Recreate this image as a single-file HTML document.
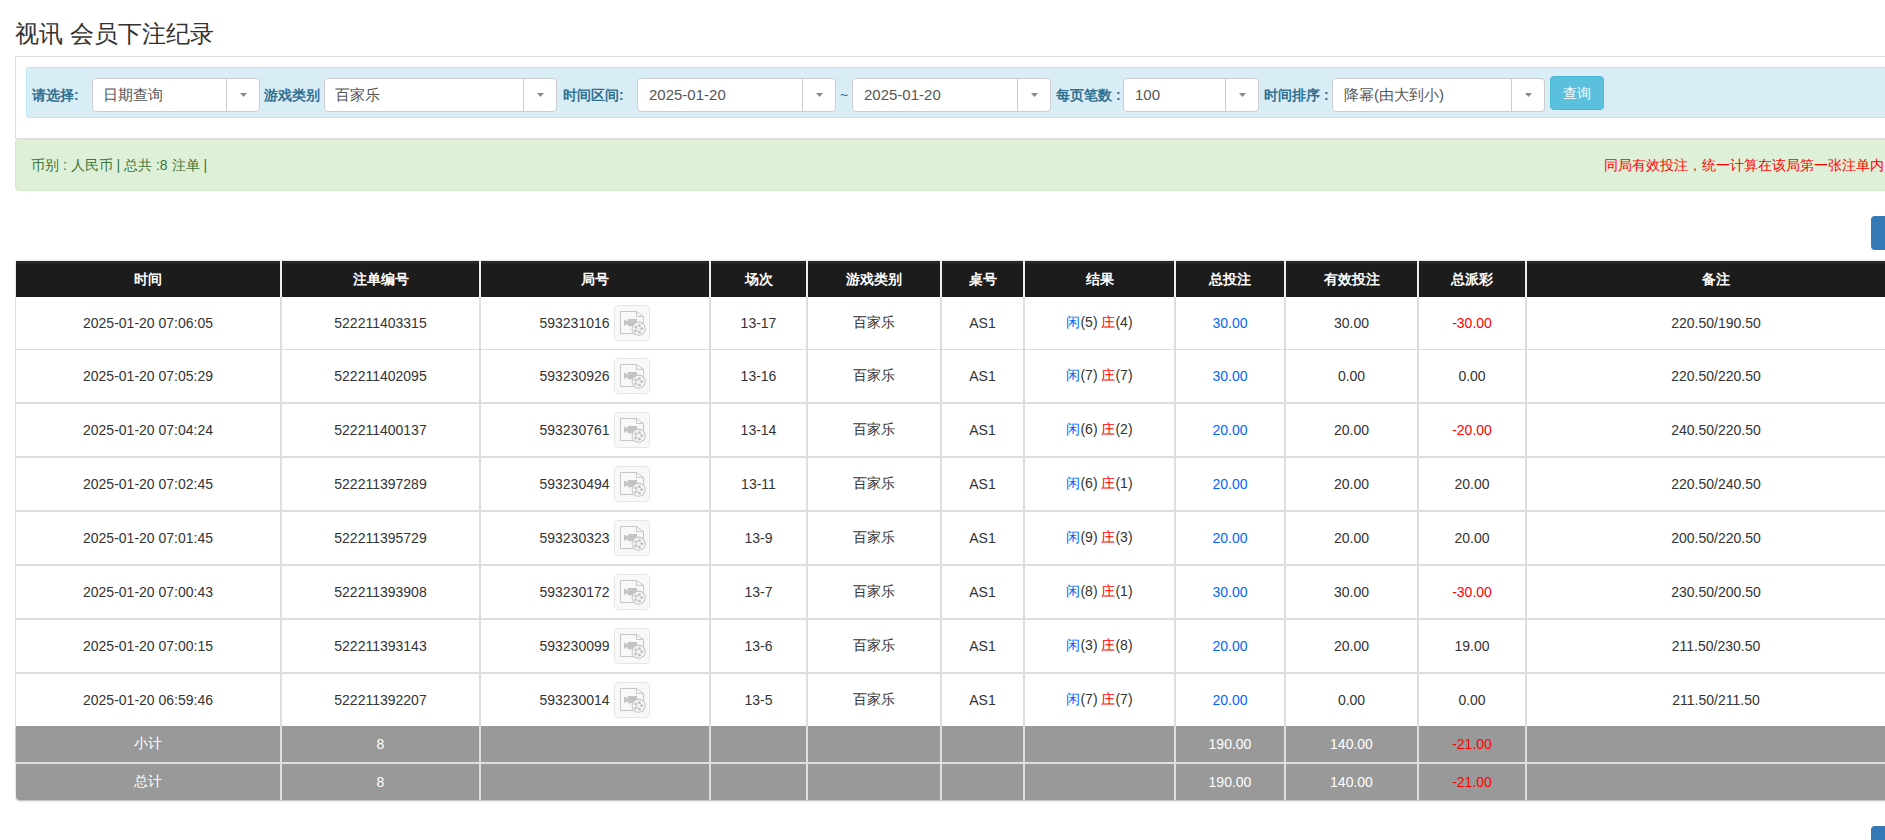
<!DOCTYPE html>
<html><head><meta charset="utf-8">
<style>
html,body{margin:0;padding:0;width:1885px;height:840px;overflow:hidden;background:#fff;}
body{font-family:"Liberation Sans",sans-serif;font-size:14px;color:#333;position:relative;}
.a{position:absolute;}
.title{left:15px;top:18px;font-size:24px;line-height:32px;color:#333;white-space:nowrap;}
.panel{left:15px;top:56px;width:1888px;height:81px;border:1px solid #ddd;border-right:none;}
.info{left:26px;top:67px;width:1880px;height:49px;background:#d9edf7;border:1px solid #bce8f1;border-radius:3px;}
.lbl{color:#31708f;font-weight:bold;font-size:14px;line-height:20px;top:85px;white-space:nowrap;}
.sel{top:78px;height:32px;background:#fff;border:1px solid #ccc;border-radius:4px;}
.sel .t{position:absolute;left:11px;top:6px;font-size:15px;line-height:20px;color:#555;white-space:nowrap;}
.sel .d{position:absolute;top:0;bottom:0;right:32px;width:1px;background:#ccc;}
.sel .ar{position:absolute;right:12px;top:14px;width:7px;height:4px;}
.btn{left:1550px;top:76px;width:52px;height:32px;background:#5bc0de;border:1px solid #46b8da;border-radius:4px;color:#fff;font-size:14px;line-height:32px;text-align:center;}
.ok{left:15px;top:139px;width:1888px;height:50px;background:#dff0d8;border:1px solid #d6e9c6;border-radius:4px;}
.okt{left:31px;top:155px;color:#3c763d;font-size:14px;line-height:20px;white-space:nowrap;}
.red{left:1604px;top:155px;color:#f00;font-size:14px;line-height:20px;white-space:nowrap;}
.bbtn{left:1871px;top:216px;width:40px;height:34px;background:#337ab7;border-radius:4px;}
.bbtn2{left:1871px;top:826px;width:40px;height:34px;background:#337ab7;border-radius:4px;}
/* table */
.tb{left:15px;top:261px;width:1890px;height:539px;}
.c{position:absolute;display:flex;align-items:center;justify-content:center;white-space:nowrap;}
.h>span{position:relative;top:1px;}
.h{background:linear-gradient(#1c1c1c 0,#2a2a2a 1px,#2a2a2a 2px,#1c1c1c 3px);color:#fff;font-weight:bold;}
.w{background:#fff;}
.g{background:#999;color:#fff;}
.bl4{border-bottom-left-radius:4px;}
.bl{color:#0066ff;}
.rd{color:#f00;}
.ic{display:inline-block;width:34px;height:34px;border:1px solid #e6e6e6;border-radius:4px;background:#f8f8f8;margin-left:5px;vertical-align:middle;margin-top:-30px;margin-bottom:-30px;position:relative;left:-1px;top:-1px;}
.ic svg{position:absolute;left:0;top:0;}
</style></head><body>
<div class="a title">视讯 会员下注纪录</div>
<div class="a panel"></div>
<div class="a info"></div>
<div class="a lbl" style="left:32px">请选择:</div>
<div class="a sel" style="left:92px;width:166px"><span class="t" style="left:10px">日期查询</span><span class="d"></span><svg class="ar" width="7" height="4"><polygon points="0,0 7,0 3.5,4" fill="#888"/></svg></div>
<div class="a lbl" style="left:264px">游戏类别</div>
<div class="a sel" style="left:324px;width:231px"><span class="t" style="left:10px">百家乐</span><span class="d"></span><svg class="ar" width="7" height="4"><polygon points="0,0 7,0 3.5,4" fill="#888"/></svg></div>
<div class="a lbl" style="left:563px">时间区间:</div>
<div class="a sel" style="left:637px;width:197px"><span class="t">2025-01-20</span><span class="d"></span><svg class="ar" width="7" height="4"><polygon points="0,0 7,0 3.5,4" fill="#888"/></svg></div>
<div class="a" style="left:840px;top:85px;line-height:20px;color:#31708f;">~</div>
<div class="a sel" style="left:852px;width:197px"><span class="t">2025-01-20</span><span class="d"></span><svg class="ar" width="7" height="4"><polygon points="0,0 7,0 3.5,4" fill="#888"/></svg></div>
<div class="a lbl" style="left:1056px">每页笔数 :</div>
<div class="a sel" style="left:1123px;width:134px"><span class="t">100</span><span class="d"></span><svg class="ar" width="7" height="4"><polygon points="0,0 7,0 3.5,4" fill="#888"/></svg></div>
<div class="a lbl" style="left:1264px">时间排序 :</div>
<div class="a sel" style="left:1332px;width:211px"><span class="t" style="left:11px">降幂(由大到小)</span><span class="d"></span><svg class="ar" width="7" height="4"><polygon points="0,0 7,0 3.5,4" fill="#888"/></svg></div>
<div class="a btn">查询</div>
<div class="a ok"></div>
<div class="a okt">币别 : 人民币 | 总共 :8 注单 |</div>
<div class="a red">同局有效投注，统一计算在该局第一张注单内</div>
<div class="a bbtn"></div>
<div class="a bbtn2"></div>
<div class="a tb">
<div style="position:absolute;left:1px;top:0;width:1889px;height:36px;background:#eee;box-shadow:0 0 2px rgba(0,0,0,.25)"></div>
<div style="position:absolute;left:0;top:36px;width:1890px;height:465px;background:#ddd"></div>
<div style="position:absolute;left:1px;top:465px;width:1889px;height:74px;background:#dedede;border-radius:0 0 4px 4px;box-shadow:0 1px 2px rgba(0,0,0,.3)"></div>
<div class="c h" style="left:1px;top:0px;width:264px;height:36px"><span>时间</span></div>
<div class="c h" style="left:267px;top:0px;width:197px;height:36px"><span>注单编号</span></div>
<div class="c h" style="left:466px;top:0px;width:228px;height:36px"><span>局号</span></div>
<div class="c h" style="left:696px;top:0px;width:95px;height:36px"><span>场次</span></div>
<div class="c h" style="left:793px;top:0px;width:132px;height:36px"><span>游戏类别</span></div>
<div class="c h" style="left:927px;top:0px;width:81px;height:36px"><span>桌号</span></div>
<div class="c h" style="left:1010px;top:0px;width:149px;height:36px"><span>结果</span></div>
<div class="c h" style="left:1161px;top:0px;width:108px;height:36px"><span>总投注</span></div>
<div class="c h" style="left:1271px;top:0px;width:131px;height:36px"><span>有效投注</span></div>
<div class="c h" style="left:1404px;top:0px;width:106px;height:36px"><span>总派彩</span></div>
<div class="c h" style="left:1512px;top:0px;width:378px;height:36px"><span>备注</span></div>
<div class="c w" style="left:1px;top:36px;width:264px;height:52px"><span>2025-01-20 07:06:05</span></div>
<div class="c w" style="left:267px;top:36px;width:197px;height:52px"><span>522211403315</span></div>
<div class="c w" style="left:466px;top:36px;width:228px;height:52px"><span>593231016<span class="ic"><svg width="34" height="34" viewBox="0 0 34 34"><path d="M5.5 5.5H21.5L28.5 10.5V27.5H5.5Z" fill="#f8f8f8" stroke="#c6c6c6" stroke-width="1"></path><path d="M21.5 5.5V10.5H28.5" fill="none" stroke="#c6c6c6" stroke-width="1"></path><path d="M9 13.5L12.7 15.5V13H22V20.3H12.7V18L9 20Z" fill="#c4c4c4"></path><circle cx="23.7" cy="22.7" r="6.6" fill="#f8f8f8" stroke="#c6c6c6" stroke-width="1.1"></circle><circle cx="20.9" cy="21" r="1.6" fill="#c4c4c4"></circle><circle cx="24.4" cy="19.5" r="1.6" fill="#c4c4c4"></circle><circle cx="26.8" cy="22.6" r="1.6" fill="#c4c4c4"></circle><circle cx="24.4" cy="26" r="1.6" fill="#c4c4c4"></circle><circle cx="20.8" cy="24.8" r="1.6" fill="#c4c4c4"></circle><circle cx="23.5" cy="22.8" r="0.5" fill="#c4c4c4"></circle></svg></span></span></div>
<div class="c w" style="left:696px;top:36px;width:95px;height:52px"><span>13-17</span></div>
<div class="c w" style="left:793px;top:36px;width:132px;height:52px"><span>百家乐</span></div>
<div class="c w" style="left:927px;top:36px;width:81px;height:52px"><span>AS1</span></div>
<div class="c w" style="left:1010px;top:36px;width:149px;height:52px"><span><span class="bl">闲</span>(5) <span class="rd">庄</span>(4)</span></div>
<div class="c w" style="left:1161px;top:36px;width:108px;height:52px"><span><span class="bl">30.00</span></span></div>
<div class="c w" style="left:1271px;top:36px;width:131px;height:52px"><span>30.00</span></div>
<div class="c w" style="left:1404px;top:36px;width:106px;height:52px"><span><span class="rd">-30.00</span></span></div>
<div class="c w" style="left:1512px;top:36px;width:378px;height:52px"><span>220.50/190.50</span></div>
<div class="c w" style="left:1px;top:89px;width:264px;height:52px"><span>2025-01-20 07:05:29</span></div>
<div class="c w" style="left:267px;top:89px;width:197px;height:52px"><span>522211402095</span></div>
<div class="c w" style="left:466px;top:89px;width:228px;height:52px"><span>593230926<span class="ic"><svg width="34" height="34" viewBox="0 0 34 34"><path d="M5.5 5.5H21.5L28.5 10.5V27.5H5.5Z" fill="#f8f8f8" stroke="#c6c6c6" stroke-width="1"></path><path d="M21.5 5.5V10.5H28.5" fill="none" stroke="#c6c6c6" stroke-width="1"></path><path d="M9 13.5L12.7 15.5V13H22V20.3H12.7V18L9 20Z" fill="#c4c4c4"></path><circle cx="23.7" cy="22.7" r="6.6" fill="#f8f8f8" stroke="#c6c6c6" stroke-width="1.1"></circle><circle cx="20.9" cy="21" r="1.6" fill="#c4c4c4"></circle><circle cx="24.4" cy="19.5" r="1.6" fill="#c4c4c4"></circle><circle cx="26.8" cy="22.6" r="1.6" fill="#c4c4c4"></circle><circle cx="24.4" cy="26" r="1.6" fill="#c4c4c4"></circle><circle cx="20.8" cy="24.8" r="1.6" fill="#c4c4c4"></circle><circle cx="23.5" cy="22.8" r="0.5" fill="#c4c4c4"></circle></svg></span></span></div>
<div class="c w" style="left:696px;top:89px;width:95px;height:52px"><span>13-16</span></div>
<div class="c w" style="left:793px;top:89px;width:132px;height:52px"><span>百家乐</span></div>
<div class="c w" style="left:927px;top:89px;width:81px;height:52px"><span>AS1</span></div>
<div class="c w" style="left:1010px;top:89px;width:149px;height:52px"><span><span class="bl">闲</span>(7) <span class="rd">庄</span>(7)</span></div>
<div class="c w" style="left:1161px;top:89px;width:108px;height:52px"><span><span class="bl">30.00</span></span></div>
<div class="c w" style="left:1271px;top:89px;width:131px;height:52px"><span>0.00</span></div>
<div class="c w" style="left:1404px;top:89px;width:106px;height:52px"><span>0.00</span></div>
<div class="c w" style="left:1512px;top:89px;width:378px;height:52px"><span>220.50/220.50</span></div>
<div class="c w" style="left:1px;top:143px;width:264px;height:52px"><span>2025-01-20 07:04:24</span></div>
<div class="c w" style="left:267px;top:143px;width:197px;height:52px"><span>522211400137</span></div>
<div class="c w" style="left:466px;top:143px;width:228px;height:52px"><span>593230761<span class="ic"><svg width="34" height="34" viewBox="0 0 34 34"><path d="M5.5 5.5H21.5L28.5 10.5V27.5H5.5Z" fill="#f8f8f8" stroke="#c6c6c6" stroke-width="1"></path><path d="M21.5 5.5V10.5H28.5" fill="none" stroke="#c6c6c6" stroke-width="1"></path><path d="M9 13.5L12.7 15.5V13H22V20.3H12.7V18L9 20Z" fill="#c4c4c4"></path><circle cx="23.7" cy="22.7" r="6.6" fill="#f8f8f8" stroke="#c6c6c6" stroke-width="1.1"></circle><circle cx="20.9" cy="21" r="1.6" fill="#c4c4c4"></circle><circle cx="24.4" cy="19.5" r="1.6" fill="#c4c4c4"></circle><circle cx="26.8" cy="22.6" r="1.6" fill="#c4c4c4"></circle><circle cx="24.4" cy="26" r="1.6" fill="#c4c4c4"></circle><circle cx="20.8" cy="24.8" r="1.6" fill="#c4c4c4"></circle><circle cx="23.5" cy="22.8" r="0.5" fill="#c4c4c4"></circle></svg></span></span></div>
<div class="c w" style="left:696px;top:143px;width:95px;height:52px"><span>13-14</span></div>
<div class="c w" style="left:793px;top:143px;width:132px;height:52px"><span>百家乐</span></div>
<div class="c w" style="left:927px;top:143px;width:81px;height:52px"><span>AS1</span></div>
<div class="c w" style="left:1010px;top:143px;width:149px;height:52px"><span><span class="bl">闲</span>(6) <span class="rd">庄</span>(2)</span></div>
<div class="c w" style="left:1161px;top:143px;width:108px;height:52px"><span><span class="bl">20.00</span></span></div>
<div class="c w" style="left:1271px;top:143px;width:131px;height:52px"><span>20.00</span></div>
<div class="c w" style="left:1404px;top:143px;width:106px;height:52px"><span><span class="rd">-20.00</span></span></div>
<div class="c w" style="left:1512px;top:143px;width:378px;height:52px"><span>240.50/220.50</span></div>
<div class="c w" style="left:1px;top:197px;width:264px;height:52px"><span>2025-01-20 07:02:45</span></div>
<div class="c w" style="left:267px;top:197px;width:197px;height:52px"><span>522211397289</span></div>
<div class="c w" style="left:466px;top:197px;width:228px;height:52px"><span>593230494<span class="ic"><svg width="34" height="34" viewBox="0 0 34 34"><path d="M5.5 5.5H21.5L28.5 10.5V27.5H5.5Z" fill="#f8f8f8" stroke="#c6c6c6" stroke-width="1"></path><path d="M21.5 5.5V10.5H28.5" fill="none" stroke="#c6c6c6" stroke-width="1"></path><path d="M9 13.5L12.7 15.5V13H22V20.3H12.7V18L9 20Z" fill="#c4c4c4"></path><circle cx="23.7" cy="22.7" r="6.6" fill="#f8f8f8" stroke="#c6c6c6" stroke-width="1.1"></circle><circle cx="20.9" cy="21" r="1.6" fill="#c4c4c4"></circle><circle cx="24.4" cy="19.5" r="1.6" fill="#c4c4c4"></circle><circle cx="26.8" cy="22.6" r="1.6" fill="#c4c4c4"></circle><circle cx="24.4" cy="26" r="1.6" fill="#c4c4c4"></circle><circle cx="20.8" cy="24.8" r="1.6" fill="#c4c4c4"></circle><circle cx="23.5" cy="22.8" r="0.5" fill="#c4c4c4"></circle></svg></span></span></div>
<div class="c w" style="left:696px;top:197px;width:95px;height:52px"><span>13-11</span></div>
<div class="c w" style="left:793px;top:197px;width:132px;height:52px"><span>百家乐</span></div>
<div class="c w" style="left:927px;top:197px;width:81px;height:52px"><span>AS1</span></div>
<div class="c w" style="left:1010px;top:197px;width:149px;height:52px"><span><span class="bl">闲</span>(6) <span class="rd">庄</span>(1)</span></div>
<div class="c w" style="left:1161px;top:197px;width:108px;height:52px"><span><span class="bl">20.00</span></span></div>
<div class="c w" style="left:1271px;top:197px;width:131px;height:52px"><span>20.00</span></div>
<div class="c w" style="left:1404px;top:197px;width:106px;height:52px"><span>20.00</span></div>
<div class="c w" style="left:1512px;top:197px;width:378px;height:52px"><span>220.50/240.50</span></div>
<div class="c w" style="left:1px;top:251px;width:264px;height:52px"><span>2025-01-20 07:01:45</span></div>
<div class="c w" style="left:267px;top:251px;width:197px;height:52px"><span>522211395729</span></div>
<div class="c w" style="left:466px;top:251px;width:228px;height:52px"><span>593230323<span class="ic"><svg width="34" height="34" viewBox="0 0 34 34"><path d="M5.5 5.5H21.5L28.5 10.5V27.5H5.5Z" fill="#f8f8f8" stroke="#c6c6c6" stroke-width="1"></path><path d="M21.5 5.5V10.5H28.5" fill="none" stroke="#c6c6c6" stroke-width="1"></path><path d="M9 13.5L12.7 15.5V13H22V20.3H12.7V18L9 20Z" fill="#c4c4c4"></path><circle cx="23.7" cy="22.7" r="6.6" fill="#f8f8f8" stroke="#c6c6c6" stroke-width="1.1"></circle><circle cx="20.9" cy="21" r="1.6" fill="#c4c4c4"></circle><circle cx="24.4" cy="19.5" r="1.6" fill="#c4c4c4"></circle><circle cx="26.8" cy="22.6" r="1.6" fill="#c4c4c4"></circle><circle cx="24.4" cy="26" r="1.6" fill="#c4c4c4"></circle><circle cx="20.8" cy="24.8" r="1.6" fill="#c4c4c4"></circle><circle cx="23.5" cy="22.8" r="0.5" fill="#c4c4c4"></circle></svg></span></span></div>
<div class="c w" style="left:696px;top:251px;width:95px;height:52px"><span>13-9</span></div>
<div class="c w" style="left:793px;top:251px;width:132px;height:52px"><span>百家乐</span></div>
<div class="c w" style="left:927px;top:251px;width:81px;height:52px"><span>AS1</span></div>
<div class="c w" style="left:1010px;top:251px;width:149px;height:52px"><span><span class="bl">闲</span>(9) <span class="rd">庄</span>(3)</span></div>
<div class="c w" style="left:1161px;top:251px;width:108px;height:52px"><span><span class="bl">20.00</span></span></div>
<div class="c w" style="left:1271px;top:251px;width:131px;height:52px"><span>20.00</span></div>
<div class="c w" style="left:1404px;top:251px;width:106px;height:52px"><span>20.00</span></div>
<div class="c w" style="left:1512px;top:251px;width:378px;height:52px"><span>200.50/220.50</span></div>
<div class="c w" style="left:1px;top:305px;width:264px;height:52px"><span>2025-01-20 07:00:43</span></div>
<div class="c w" style="left:267px;top:305px;width:197px;height:52px"><span>522211393908</span></div>
<div class="c w" style="left:466px;top:305px;width:228px;height:52px"><span>593230172<span class="ic"><svg width="34" height="34" viewBox="0 0 34 34"><path d="M5.5 5.5H21.5L28.5 10.5V27.5H5.5Z" fill="#f8f8f8" stroke="#c6c6c6" stroke-width="1"></path><path d="M21.5 5.5V10.5H28.5" fill="none" stroke="#c6c6c6" stroke-width="1"></path><path d="M9 13.5L12.7 15.5V13H22V20.3H12.7V18L9 20Z" fill="#c4c4c4"></path><circle cx="23.7" cy="22.7" r="6.6" fill="#f8f8f8" stroke="#c6c6c6" stroke-width="1.1"></circle><circle cx="20.9" cy="21" r="1.6" fill="#c4c4c4"></circle><circle cx="24.4" cy="19.5" r="1.6" fill="#c4c4c4"></circle><circle cx="26.8" cy="22.6" r="1.6" fill="#c4c4c4"></circle><circle cx="24.4" cy="26" r="1.6" fill="#c4c4c4"></circle><circle cx="20.8" cy="24.8" r="1.6" fill="#c4c4c4"></circle><circle cx="23.5" cy="22.8" r="0.5" fill="#c4c4c4"></circle></svg></span></span></div>
<div class="c w" style="left:696px;top:305px;width:95px;height:52px"><span>13-7</span></div>
<div class="c w" style="left:793px;top:305px;width:132px;height:52px"><span>百家乐</span></div>
<div class="c w" style="left:927px;top:305px;width:81px;height:52px"><span>AS1</span></div>
<div class="c w" style="left:1010px;top:305px;width:149px;height:52px"><span><span class="bl">闲</span>(8) <span class="rd">庄</span>(1)</span></div>
<div class="c w" style="left:1161px;top:305px;width:108px;height:52px"><span><span class="bl">30.00</span></span></div>
<div class="c w" style="left:1271px;top:305px;width:131px;height:52px"><span>30.00</span></div>
<div class="c w" style="left:1404px;top:305px;width:106px;height:52px"><span><span class="rd">-30.00</span></span></div>
<div class="c w" style="left:1512px;top:305px;width:378px;height:52px"><span>230.50/200.50</span></div>
<div class="c w" style="left:1px;top:359px;width:264px;height:52px"><span>2025-01-20 07:00:15</span></div>
<div class="c w" style="left:267px;top:359px;width:197px;height:52px"><span>522211393143</span></div>
<div class="c w" style="left:466px;top:359px;width:228px;height:52px"><span>593230099<span class="ic"><svg width="34" height="34" viewBox="0 0 34 34"><path d="M5.5 5.5H21.5L28.5 10.5V27.5H5.5Z" fill="#f8f8f8" stroke="#c6c6c6" stroke-width="1"></path><path d="M21.5 5.5V10.5H28.5" fill="none" stroke="#c6c6c6" stroke-width="1"></path><path d="M9 13.5L12.7 15.5V13H22V20.3H12.7V18L9 20Z" fill="#c4c4c4"></path><circle cx="23.7" cy="22.7" r="6.6" fill="#f8f8f8" stroke="#c6c6c6" stroke-width="1.1"></circle><circle cx="20.9" cy="21" r="1.6" fill="#c4c4c4"></circle><circle cx="24.4" cy="19.5" r="1.6" fill="#c4c4c4"></circle><circle cx="26.8" cy="22.6" r="1.6" fill="#c4c4c4"></circle><circle cx="24.4" cy="26" r="1.6" fill="#c4c4c4"></circle><circle cx="20.8" cy="24.8" r="1.6" fill="#c4c4c4"></circle><circle cx="23.5" cy="22.8" r="0.5" fill="#c4c4c4"></circle></svg></span></span></div>
<div class="c w" style="left:696px;top:359px;width:95px;height:52px"><span>13-6</span></div>
<div class="c w" style="left:793px;top:359px;width:132px;height:52px"><span>百家乐</span></div>
<div class="c w" style="left:927px;top:359px;width:81px;height:52px"><span>AS1</span></div>
<div class="c w" style="left:1010px;top:359px;width:149px;height:52px"><span><span class="bl">闲</span>(3) <span class="rd">庄</span>(8)</span></div>
<div class="c w" style="left:1161px;top:359px;width:108px;height:52px"><span><span class="bl">20.00</span></span></div>
<div class="c w" style="left:1271px;top:359px;width:131px;height:52px"><span>20.00</span></div>
<div class="c w" style="left:1404px;top:359px;width:106px;height:52px"><span>19.00</span></div>
<div class="c w" style="left:1512px;top:359px;width:378px;height:52px"><span>211.50/230.50</span></div>
<div class="c w" style="left:1px;top:413px;width:264px;height:52px"><span>2025-01-20 06:59:46</span></div>
<div class="c w" style="left:267px;top:413px;width:197px;height:52px"><span>522211392207</span></div>
<div class="c w" style="left:466px;top:413px;width:228px;height:52px"><span>593230014<span class="ic"><svg width="34" height="34" viewBox="0 0 34 34"><path d="M5.5 5.5H21.5L28.5 10.5V27.5H5.5Z" fill="#f8f8f8" stroke="#c6c6c6" stroke-width="1"></path><path d="M21.5 5.5V10.5H28.5" fill="none" stroke="#c6c6c6" stroke-width="1"></path><path d="M9 13.5L12.7 15.5V13H22V20.3H12.7V18L9 20Z" fill="#c4c4c4"></path><circle cx="23.7" cy="22.7" r="6.6" fill="#f8f8f8" stroke="#c6c6c6" stroke-width="1.1"></circle><circle cx="20.9" cy="21" r="1.6" fill="#c4c4c4"></circle><circle cx="24.4" cy="19.5" r="1.6" fill="#c4c4c4"></circle><circle cx="26.8" cy="22.6" r="1.6" fill="#c4c4c4"></circle><circle cx="24.4" cy="26" r="1.6" fill="#c4c4c4"></circle><circle cx="20.8" cy="24.8" r="1.6" fill="#c4c4c4"></circle><circle cx="23.5" cy="22.8" r="0.5" fill="#c4c4c4"></circle></svg></span></span></div>
<div class="c w" style="left:696px;top:413px;width:95px;height:52px"><span>13-5</span></div>
<div class="c w" style="left:793px;top:413px;width:132px;height:52px"><span>百家乐</span></div>
<div class="c w" style="left:927px;top:413px;width:81px;height:52px"><span>AS1</span></div>
<div class="c w" style="left:1010px;top:413px;width:149px;height:52px"><span><span class="bl">闲</span>(7) <span class="rd">庄</span>(7)</span></div>
<div class="c w" style="left:1161px;top:413px;width:108px;height:52px"><span><span class="bl">20.00</span></span></div>
<div class="c w" style="left:1271px;top:413px;width:131px;height:52px"><span>0.00</span></div>
<div class="c w" style="left:1404px;top:413px;width:106px;height:52px"><span>0.00</span></div>
<div class="c w" style="left:1512px;top:413px;width:378px;height:52px"><span>211.50/211.50</span></div>
<div class="c g" style="left:1px;top:465px;width:264px;height:36px"><span>小计</span></div>
<div class="c g" style="left:267px;top:465px;width:197px;height:36px"><span>8</span></div>
<div class="c g" style="left:466px;top:465px;width:228px;height:36px"><span></span></div>
<div class="c g" style="left:696px;top:465px;width:95px;height:36px"><span></span></div>
<div class="c g" style="left:793px;top:465px;width:132px;height:36px"><span></span></div>
<div class="c g" style="left:927px;top:465px;width:81px;height:36px"><span></span></div>
<div class="c g" style="left:1010px;top:465px;width:149px;height:36px"><span></span></div>
<div class="c g" style="left:1161px;top:465px;width:108px;height:36px"><span>190.00</span></div>
<div class="c g" style="left:1271px;top:465px;width:131px;height:36px"><span>140.00</span></div>
<div class="c g" style="left:1404px;top:465px;width:106px;height:36px"><span><span class="rd">-21.00</span></span></div>
<div class="c g" style="left:1512px;top:465px;width:378px;height:36px"><span></span></div>
<div class="c g bl4" style="left:1px;top:503px;width:264px;height:36px"><span>总计</span></div>
<div class="c g" style="left:267px;top:503px;width:197px;height:36px"><span>8</span></div>
<div class="c g" style="left:466px;top:503px;width:228px;height:36px"><span></span></div>
<div class="c g" style="left:696px;top:503px;width:95px;height:36px"><span></span></div>
<div class="c g" style="left:793px;top:503px;width:132px;height:36px"><span></span></div>
<div class="c g" style="left:927px;top:503px;width:81px;height:36px"><span></span></div>
<div class="c g" style="left:1010px;top:503px;width:149px;height:36px"><span></span></div>
<div class="c g" style="left:1161px;top:503px;width:108px;height:36px"><span>190.00</span></div>
<div class="c g" style="left:1271px;top:503px;width:131px;height:36px"><span>140.00</span></div>
<div class="c g" style="left:1404px;top:503px;width:106px;height:36px"><span><span class="rd">-21.00</span></span></div>
<div class="c g" style="left:1512px;top:503px;width:378px;height:36px"><span></span></div>
</div>
</body></html>
